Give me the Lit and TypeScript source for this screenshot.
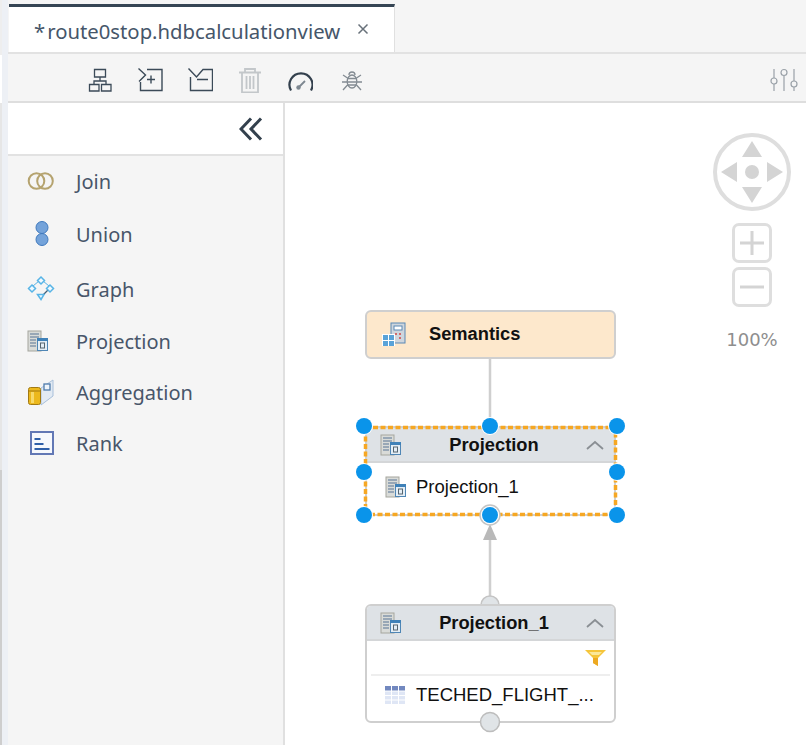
import { LitElement, css, html, svg } from 'lit'
import { customElement } from 'lit/decorators.js'

const projectionIcon = html`<svg class="node-icon" width="22" height="22" viewBox="0 0 22 22">
   <rect x="1" y="1" width="13" height="20" fill="#d9dbd8" stroke="#a5a69e"/>
   <path d="M3 4h9M3 7h9M3 10h6M3 13h6M3 16h6" stroke="#8296aa" stroke-width="1.300"/>
   <rect x="10.500" y="8.500" width="10" height="12" fill="#e4eef6" stroke="#4f86b5"/>
   <rect x="10" y="8" width="11" height="3" fill="#3f81b8"/>
   <rect x="13.500" y="13" width="4" height="5" fill="none" stroke="#56656f"/>
</svg>`

const sideIcons: Record<string, unknown> = {
   Join: html`<svg width="28" height="28" viewBox="0 0 28 28" fill="none">
      <circle cx="9.500" cy="14" r="7.800" stroke="#b5a36f" stroke-width="2"/>
      <circle cx="18" cy="14" r="7.800" stroke="#b5a36f" stroke-width="2"/>
   </svg>`,
   Union: html`<svg width="28" height="28" viewBox="0 0 28 28">
      <circle cx="15" cy="7.500" r="6" fill="#74a3da" stroke="#3f79bd"/>
      <circle cx="15" cy="19.500" r="6" fill="#74a3da" stroke="#3f79bd"/>
   </svg>`,
   Graph: html`<svg width="28" height="28" viewBox="0 0 28 28" fill="#f0f9fe" stroke="#58b4e6" stroke-width="1.500">
      <path d="M6 11 12 6M16 6l6 5" fill="none" stroke="#58b4e6" stroke-width="1"/>
      <path d="M22 14l-6 6" fill="none" stroke="#3f5f78" stroke-width="1.200"/>
      <path d="M14 2l3.500 3.500L14 9l-3.500-3.500z"/>
      <path d="M5 10l3.500 3.500L5 17l-3.500-3.500z"/>
      <path d="M23 10l3.500 3.500L23 17l-3.500-3.500z"/>
      <path d="M10.500 19.500h6.500l-3 5z"/>
   </svg>`,
   Aggregation: html`<svg width="28" height="28" viewBox="0 0 28 28">
      <path d="M14 10 26 2v16l-12 9z" fill="#e2eaf3" stroke="#a9c0da"/>
      <rect x="17" y="6" width="6" height="6" fill="#eef4fa" stroke="#4f7bab" stroke-width="1.300"/>
      <rect x="1.500" y="9.500" width="12" height="17" rx="2" fill="#ecb81c" stroke="#a27a12"/>
      <path d="M1.500 13h12" stroke="#a27a12"/>
      <rect x="4" y="14" width="3" height="11" fill="#f7d96a"/>
   </svg>`,
   Rank: html`<svg width="28" height="28" viewBox="0 0 28 28">
      <rect x="4" y="3" width="22" height="22" fill="#f6f8fc" stroke="#6278b5" stroke-width="2"/>
      <path d="M7.500 10h6M7.500 15h9M7.500 20h15" stroke="#2f5fa8" stroke-width="2"/>
   </svg>`
}

const toolbarIcons = [
   svg`<path d="M7.500 2.500h11v7.500h-11zM13 10v4M7 17v-3h12v3M2.500 17.500h9.500v6.500h-9.500zM14.500 17.500h9.500v6.500h-9.500z" fill="none" stroke="#3b4a58" stroke-width="1.300"/>`,
   svg`<path d="M10 2.500h15v21h-21.500v-8.500M1.500 1.500 8.500 8l-6.500 6.500M10 12.500h8M14 8.500v8" fill="none" stroke="#3b4a58" stroke-width="1.400"/>`,
   svg`<path d="M1.500 1.500 9.500 10 16 2.500h9.500v21h-22v-13.500M10 12.500h11" fill="none" stroke="#3b4a58" stroke-width="1.400"/>`,
   svg`<path d="M2 5.500h22M8 5V2h10v3M5 6v19.500h16V6M9.500 9v13M13 9v13M16.500 9v13" fill="none" stroke="#c3c7ca" stroke-width="1.800"/>`,
   svg`<path d="M4 23.500a11.500 11.500 0 1 1 20 0" fill="none" stroke="#33404d" stroke-width="2.200"/><path d="M12 20l6-6" stroke="#7d8790" stroke-width="1.800"/><circle cx="11.500" cy="20.500" r="2.200" fill="#7d8790"/>`,
   svg`<path d="M12 8a3 3 0 0 1 6 0M10.500 11.500h9M10.500 15h9M10.500 18h9M10.500 11 6 8M19.500 11l4.500-3M10 15H5M20 15h5M10.500 18 6 23M19.500 18l4.500 5" fill="none" stroke="#838b92" stroke-width="1.300"/><ellipse cx="15" cy="14.500" rx="4.800" ry="6.500" fill="none" stroke="#838b92" stroke-width="1.300"/>`
]

// gap is the space above each row; the rows of the palette are not evenly spaced
const paletteItems = [
   { name: 'Join', gap: 5 },
   { name: 'Union', gap: 13 },
   { name: 'Graph', gap: 15 },
   { name: 'Projection', gap: 12 },
   { name: 'Aggregation', gap: 11 },
   { name: 'Rank', gap: 11 }
]

// handle centres on the selected node, relative to the canvas
const handles = [
   [79, 323], [205, 323], [332, 323],
   [79, 369], [332, 369],
   [79, 412], [205, 412], [332, 412]
]

const chevron = html`<svg class="chev" width="18" height="10" viewBox="0 0 18 10"><path d="M1 9l8-7 8 7" fill="none" stroke="#8a8f94" stroke-width="1.800"/></svg>`

@customElement('app-root')
export class AppRoot extends LitElement {

   render() {
      return html`
         <div class="app">
            <div class="gutter"><span class="rail"></span></div>
            <div class="main">
               <header class="tabbar">
                  <div class="tab">
                     <span class="tab-name"><i>*</i>route0stop.hdbcalculationview</span>
                     <svg class="tab-close" width="12" height="12" viewBox="0 0 12 12">
                        <path d="M1.500 1.500l9 9M10.500 1.500l-9 9" stroke="#68717a" stroke-width="1.500"/>
                     </svg>
                  </div>
               </header>
               <div class="toolbar">
                  <div class="tools">
                     ${toolbarIcons.map(i => html`<svg width="26" height="26" viewBox="0 0 26 26">${i}</svg>`)}
                  </div>
                  <svg class="settings" width="28" height="24" viewBox="0 0 28 24" fill="none" stroke="#9aa1a8" stroke-width="1.200">
                     <path d="M4 1v9M4 16v7M14 8v15M24 1v12M24 19v4"/>
                     <circle cx="4" cy="13" r="3"/><circle cx="14" cy="4.500" r="3"/><circle cx="24" cy="16" r="3"/>
                  </svg>
               </div>
               <div class="body">
                  <aside class="sidebar">
                     <div class="side-head">
                        <svg width="24" height="24" viewBox="0 0 24 24" fill="none" stroke="#33404d" stroke-width="3">
                           <path d="M12 1.500 2 12l10 10.500M22 1.500 12 12l10 10.500"/>
                        </svg>
                     </div>
                     <ul class="palette">
                        ${paletteItems.map(item => html`
                           <li style="margin-top:${item.gap}px">
                              <span class="pal-icon">${item.name === 'Projection' ? projectionIcon : sideIcons[item.name]}</span>
                              <span>${item.name}</span>
                           </li>`)}
                     </ul>
                  </aside>
                  <section class="canvas">
                     <svg class="wires" width="521" height="642">
                        <path d="M205 255V322M205 437V502" stroke="#cfcfcf" stroke-width="2.500"/>
                        <path d="M205 421l7 16h-14z" fill="#b9b9b9"/>
                        <circle cx="205" cy="502" r="9" fill="#e0e4e7" stroke="#c4c4c4" stroke-width="1.500"/>
                     </svg>

                     <div class="node semantics">
                        <svg width="26" height="26" viewBox="0 0 26 26">
                           <rect x="10" y="2" width="14" height="20" fill="#cfd6dd" stroke="#5b88b4"/>
                           <rect x="13" y="5" width="8" height="4" fill="#fff" stroke="#5b88b4"/>
                           <path d="M14 13h2M18 13h2M18 17h2" stroke="#d06a6a" stroke-width="2"/>
                           <rect x="1" y="13" width="13" height="12" fill="#fff"/>
                           <path d="M2 14h5v5H2zM8 14h5v5H8zM2 20h5v5H2zM8 20h5v5H8z" fill="#5aa3d8"/>
                        </svg>
                        <b>Semantics</b>
                     </div>

                     <div class="node projection">
                        <div class="node-head">${projectionIcon}<b>Projection</b>${chevron}</div>
                        <div class="node-row">${projectionIcon}<span>Projection_1</span></div>
                     </div>

                     <div class="node source">
                        <div class="node-head">${projectionIcon}<b>Projection_1</b>${chevron}</div>
                        <div class="filter-row">
                           <svg width="21" height="18" viewBox="0 0 21 18">
                              <path d="M0 1h21l-8 8v8l-5-3V9z" fill="#f5c53a"/>
                              <path d="M8 9h5v8l-5-3z" fill="#eda922"/>
                              <path d="M4 3h13l-3 3H7z" fill="#fbe89a"/>
                           </svg>
                        </div>
                        <div class="node-row table">
                           <svg width="20" height="18" viewBox="0 0 20 18">
                              <rect width="20" height="18" fill="#dfe6f5"/>
                              <rect width="20" height="5" fill="#7288bf"/>
                              <path d="M6.500 0v18M13.500 0v18M0 5h20M0 9.500h20M0 14h20" stroke="#fff" stroke-width="1"/>
                           </svg>
                           <span>TECHED_FLIGHT_...</span>
                        </div>
                     </div>

                     <svg class="over" width="521" height="642">
                        <rect x="80.500" y="324.500" width="250" height="87" fill="none" stroke="#f6a723" stroke-width="3.500" stroke-dasharray="5 2.500"/>
                        <circle cx="205" cy="412" r="10" fill="#eceff1" stroke="#c4c4c4" stroke-width="1.500"/>
                        <circle cx="205" cy="619" r="9.500" fill="#e0e4e7" stroke="#bdbdbd" stroke-width="1.500"/>
                     </svg>

                     ${handles.map(([x, y]) => html`<span class="handle" style="left:${x}px;top:${y}px"></span>`)}

                     <div class="nav">
                        <svg width="80" height="80" viewBox="0 0 80 80" fill="#d4d4d4">
                           <circle cx="40" cy="40" r="37" fill="#fff" stroke="#dedede" stroke-width="4"/>
                           <path d="M40 9l10 16H30zM40 71 30 55h20zM9 40l16-10v20zM71 40 55 30v20z"/>
                           <circle cx="40" cy="40" r="7"/>
                        </svg>
                        <button class="zoom-btn">
                           <svg width="24" height="24" viewBox="0 0 24 24"><path d="M12 0v24M0 12h24" stroke="#d4d4d4" stroke-width="3"/></svg>
                        </button>
                        <button class="zoom-btn">
                           <svg width="24" height="24" viewBox="0 0 24 24"><path d="M0 12h24" stroke="#d4d4d4" stroke-width="3"/></svg>
                        </button>
                        <span class="pct">100%</span>
                     </div>
                  </section>
               </div>
            </div>
         </div>
      `
   }

   static styles = css`
   :host {
      display: block;
      width: 806px;
      height: 745px;
      overflow: hidden;
      background: #fff;
      font-family: "Noto Sans", "Open Sans", sans-serif;
   }
   .app {
      display: flex;
      height: 745px;
   }
   .gutter {
      width: 8px;
      background: #edf0f5;
   }
   .rail {
      display: block;
      width: 2px;
      height: 745px;
      background: linear-gradient(#eeeeee 0 55px, #ffffff 55px 103px, #e6e6e6 103px 470px, #cecece 470px);
   }
   .main {
      flex: 1;
      display: flex;
      flex-direction: column;
      min-width: 0;
   }
   .tabbar {
      height: 54px;
      box-sizing: border-box;
      padding: 4px 0 0 1px;
      background: #f5f5f5;
      border-bottom: 2px solid #e2e2e2;
   }
   .tab {
      width: 386px;
      height: 48px;
      box-sizing: border-box;
      border-top: 3px solid #354554;
      border-right: 1px solid #e0e0e0;
      background: #fff;
      display: flex;
      align-items: center;
      padding: 0 25px;
      justify-content: space-between;
   }
   .tab-name {
      font-size: 20.300px;
      color: #46566a;
      white-space: nowrap;
      margin-top: 3px;
   }
   .tab-name i {
      font-style: normal;
      margin-right: 2px;
   }
   .tab-close {
      margin-top: -2px;
   }
   .toolbar {
      height: 49px;
      box-sizing: border-box;
      background: #f5f5f5;
      border-bottom: 2px solid #dedede;
      display: flex;
      align-items: center;
      justify-content: space-between;
      padding: 5px 8px 0 79px;
   }
   .tools {
      display: flex;
      gap: 24px;
   }
   .body {
      flex: 1;
      display: flex;
      min-height: 0;
   }
   .sidebar {
      width: 277px;
      box-sizing: border-box;
      border-right: 2px solid #e0e0e0;
      background: #f5f5f5;
   }
   .side-head {
      height: 53px;
      box-sizing: border-box;
      background: #fff;
      border-bottom: 2px solid #e2e2e2;
      display: flex;
      align-items: center;
      justify-content: flex-end;
      padding-right: 20px;
   }
   .palette {
      list-style: none;
      margin: 0;
      padding: 0;
      font-size: 20px;
      color: #48566a;
   }
   .palette li {
      height: 40px;
      display: flex;
      align-items: center;
   }
   .pal-icon {
      width: 68px;
      padding-left: 19px;
      box-sizing: border-box;
      display: flex;
   }
   .canvas {
      position: relative;
      flex: 1;
      background: #fff;
   }
   .wires, .over {
      position: absolute;
      left: 0;
      top: 0;
   }
   .node {
      position: absolute;
      left: 80px;
      width: 251px;
      box-sizing: border-box;
      border: 2px solid #cfcfcf;
      border-radius: 6px;
      background: #fff;
      font-family: "Liberation Sans", Arial, sans-serif;
      color: #111;
      font-size: 18.500px;
   }
   .node b {
      font-size: 18.300px;
   }
   .semantics {
      top: 207px;
      height: 49px;
      background: #fde8cc;
      display: flex;
      align-items: center;
      padding: 0 0 1px 14px;
      gap: 22px;
   }
   .projection {
      top: 323px;
      height: 90px;
      border-radius: 0;
   }
   .source {
      top: 501px;
      height: 119px;
   }
   .node-head {
      height: 33px;
      background: #dee2e6;
      border-bottom: 2px solid #d4d6d8;
      display: flex;
      align-items: center;
      padding: 0 10px 0 13px;
   }
   .source .node-head {
      border-radius: 4px 4px 0 0;
   }
   .node-head b {
      flex: 1;
      text-align: center;
   }
   .node-icon, .chev {
      flex: none;
   }
   .node-row {
      height: 48px;
      display: flex;
      align-items: center;
      padding-left: 18px;
      gap: 9px;
   }
   .filter-row {
      height: 33px;
      margin: 0 4px;
      border-bottom: 2px solid #eee;
      display: flex;
      align-items: center;
      justify-content: flex-end;
      padding-right: 4px;
   }
   .table {
      box-sizing: border-box;
      height: 44px;
      padding-bottom: 6px;
      gap: 11px;
   }
   .handle {
      position: absolute;
      width: 16px;
      height: 16px;
      margin: -8px 0 0 -8px;
      border-radius: 50%;
      background: #0a94ea;
      box-shadow: 0 0 0 1px #fff;
   }
   .nav {
      position: absolute;
      left: 427px;
      top: 29px;
      display: flex;
      flex-direction: column;
      align-items: center;
      width: 80px;
   }
   .zoom-btn {
      width: 40px;
      height: 40px;
      margin-top: 4px;
      padding: 0;
      border: 3px solid #dedede;
      border-radius: 7px;
      background: #fff;
      display: flex;
      align-items: center;
      justify-content: center;
   }
   .nav > svg + .zoom-btn {
      margin-top: 11px;
   }
   .pct {
      margin-top: 22px;
      font-family: "DejaVu Sans", sans-serif;
      font-size: 18px;
      color: #8e8e8e;
   }
   `
}

declare global {
   interface HTMLElementTagNameMap {
      'app-root': AppRoot
   }
}
